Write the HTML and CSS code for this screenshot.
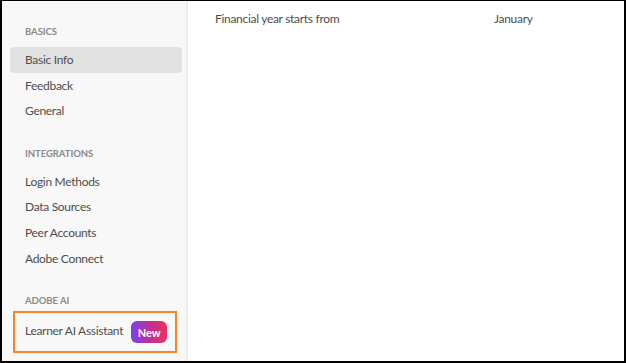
FILE: index.html
```html
<!DOCTYPE html>
<html lang="en">
<head>
<meta charset="utf-8">
<title>Settings</title>
<link rel="stylesheet" href="styles.css">
</head>
<body>
<div class="frame">
  <nav class="sidebar">
    <div class="group">
      <div class="group-title">Basics</div>
      <div class="item active">Basic Info</div>
      <div class="item">Feedback</div>
      <div class="item">General</div>
    </div>
    <div class="group">
      <div class="group-title">Integrations</div>
      <div class="item">Login Methods</div>
      <div class="item">Data Sources</div>
      <div class="item">Peer Accounts</div>
      <div class="item">Adobe Connect</div>
    </div>
    <div class="group">
      <div class="group-title">Adobe AI</div>
      <div class="item highlight">
        <span class="item-text">Learner AI Assistant</span>
        <span class="badge">New</span>
      </div>
    </div>
  </nav>
  <main class="content">
    <div class="row">
      <span class="label">Financial year starts from</span>
      <span class="value">January</span>
    </div>
  </main>
</div>
</body>
</html>
```
FILE: styles.css
```css
html, body {
  margin: 0;
  padding: 0;
  background: #ffffff;
}

body {
  font-family: "Lato", "Liberation Sans", sans-serif;
  color: #4b4b4b;
}

.frame {
  box-sizing: border-box;
  width: 626px;
  height: 363px;
  border: 2px solid #000;
  border-top-width: 1px;
  display: flex;
  overflow: hidden;
}

.sidebar {
  width: 184px;
  flex: none;
  background: #f8f8f8;
  border-right: 2px solid #ececec;
  padding-top: 23px;
}

.group + .group {
  margin-top: 22px;
}

.group-title {
  height: 16px;
  line-height: 16px;
  margin-bottom: 7px;
  padding-left: 23px;
  font-size: 9.5px;
  font-weight: 700;
  letter-spacing: -0.05px;
  text-transform: uppercase;
  color: #8a8a8a;
}

.item {
  height: 25.6px;
  line-height: 25.6px;
  margin: 0 4px 0 8px;
  padding-left: 15px;
  border-radius: 4px;
  font-size: 12px;
  letter-spacing: -0.3px;
  color: #4e4e4e;
  white-space: nowrap;
}

.item.active {
  background: #e1e1e1;
}

.item.highlight {
  box-sizing: border-box;
  height: 42px;
  width: 164px;
  margin: -5px 0 0 11px;
  padding-left: 10px;
  border: 2px solid #f5842a;
  border-radius: 0;
  display: flex;
  align-items: center;
  gap: 8px;
  line-height: normal;
}

.item-text {
  flex: none;
  margin-top: -3px;
}

.badge {
  flex: none;
  display: inline-flex;
  align-items: center;
  justify-content: center;
  width: 36px;
  height: 22px;
  border-radius: 6px;
  background: linear-gradient(90deg, #7b3ff0 0%, #c0308f 55%, #e9345a 100%);
  color: #ffffff;
  font-size: 11px;
  font-weight: 700;
  letter-spacing: 0;
}

.content {
  flex: 1;
  background: #ffffff;
  padding: 10px 0 0 27px;
}

.row {
  display: flex;
  height: 16px;
  line-height: 16px;
  font-size: 12px;
  letter-spacing: -0.3px;
  color: #4e4e4e;
}

.label {
  width: 279px;
}
```
